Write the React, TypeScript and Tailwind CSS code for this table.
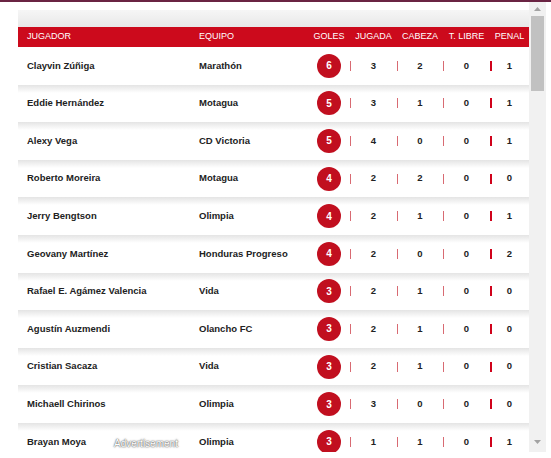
import React from 'react';

type Row = { name: string; team: string; goles: number; jugada: number; cabeza: number; libre: number; penal: number };

const rows: Row[] = [
  { name: 'Clayvin Zúñiga', team: 'Marathón', goles: 6, jugada: 3, cabeza: 2, libre: 0, penal: 1 },
  { name: 'Eddie Hernández', team: 'Motagua', goles: 5, jugada: 3, cabeza: 1, libre: 0, penal: 1 },
  { name: 'Alexy Vega', team: 'CD Victoria', goles: 5, jugada: 4, cabeza: 0, libre: 0, penal: 1 },
  { name: 'Roberto Moreira', team: 'Motagua', goles: 4, jugada: 2, cabeza: 2, libre: 0, penal: 0 },
  { name: 'Jerry Bengtson', team: 'Olimpia', goles: 4, jugada: 2, cabeza: 1, libre: 0, penal: 1 },
  { name: 'Geovany Martínez', team: 'Honduras Progreso', goles: 4, jugada: 2, cabeza: 0, libre: 0, penal: 2 },
  { name: 'Rafael E. Agámez Valencia', team: 'Vida', goles: 3, jugada: 2, cabeza: 1, libre: 0, penal: 0 },
  { name: 'Agustín Auzmendi', team: 'Olancho FC', goles: 3, jugada: 2, cabeza: 1, libre: 0, penal: 0 },
  { name: 'Cristian Sacaza', team: 'Vida', goles: 3, jugada: 2, cabeza: 1, libre: 0, penal: 0 },
  { name: 'Michaell Chirinos', team: 'Olimpia', goles: 3, jugada: 3, cabeza: 0, libre: 0, penal: 0 },
  { name: 'Brayan Moya', team: 'Olimpia', goles: 3, jugada: 1, cabeza: 1, libre: 0, penal: 1 },
];

const StatCell = ({ value, w, strong }: { value: number; w: string; strong?: boolean }) => (
  <div className={`relative flex items-center justify-center ${w}`}>
    <span className={`absolute left-0 top-1/2 -translate-y-1/2 h-[10px] ${strong ? 'w-[2px] bg-[#d0021b]' : 'w-px bg-[#d86a72]'}`}></span>
    <span>{value}</span>
  </div>
);

const App: React.FC = () => {
  return (
    <div className="w-[551px] h-[458px] bg-white overflow-hidden relative" style={{ fontFamily: '"Liberation Sans", Arial, sans-serif' }}>
      <div className="h-[2px] bg-[#6a2443]"></div>
      <div className="flex ml-[18px] w-[528px] h-[450px]">
        {/* tabla */}
        <div className="w-[511px] flex flex-col overflow-hidden">
          <div className="h-[8px] shrink-0"></div>
          <div className="h-[17px] shrink-0 bg-gradient-to-b from-[#f6f6f6] to-[#e8e8e8]"></div>
          <div className="h-[20px] shrink-0 bg-[#cc0a1c] flex items-center text-white text-[9px] uppercase">
            <div className="w-[172px] pl-[9px]">Jugador</div>
            <div className="w-[118px] pl-[9px]">Equipo</div>
            <div className="w-[42px] text-center">Goles</div>
            <div className="w-[47px] text-center">Jugada</div>
            <div className="w-[46px] text-center">Cabeza</div>
            <div className="w-[47px] text-center">T. Libre</div>
            <div className="w-[39px] text-center">Penal</div>
          </div>
          {rows.map((r, i) => (
            <div
              key={r.name}
              className={`h-[37.6px] shrink-0 flex items-center text-[9.5px] font-bold text-[#222] ${i > 0 ? 'bg-[linear-gradient(to_bottom,#e4e4e4_0px,#ffffff_8px)]' : 'bg-white'}`}
            >
              <div className="w-[172px] pl-[9px] truncate">{r.name}</div>
              <div className="w-[118px] pl-[9px] truncate">{r.team}</div>
              <div className="w-[42px] flex justify-center">
                <span className="w-[24px] h-[24px] rounded-full bg-[#c10f1f] text-white text-[10px] flex items-center justify-center">{r.goles}</span>
              </div>
              <StatCell value={r.jugada} w="w-[47px]" />
              <StatCell value={r.cabeza} w="w-[46px]" />
              <StatCell value={r.libre} w="w-[47px]" />
              <StatCell value={r.penal} w="w-[39px]" strong />
            </div>
          ))}
        </div>
        {/* barra de desplazamiento */}
        <div className="w-[17px] bg-[#f1f1f1] flex flex-col items-center">
          <div className="h-[14px] flex items-center justify-center">
            <svg width="7" height="4" viewBox="0 0 7 4"><path d="M3.5 0 L7 4 L0 4 Z" fill="#a3a3a3" /></svg>
          </div>
          <div className="w-[13px] h-[75px] bg-[#c1c1c1]"></div>
          <div className="flex-1"></div>
          <div className="h-[14px] flex items-center justify-center mb-[3px]">
            <svg width="7" height="4" viewBox="0 0 7 4"><path d="M0 0 L7 0 L3.5 4 Z" fill="#a3a3a3" /></svg>
          </div>
        </div>
      </div>
      <div className="absolute left-[114px] top-[436px] text-[10px] text-white [text-shadow:0_0_2px_#555,0_0_1px_#555]">Advertisement</div>
    </div>
  );
};

export default App;
